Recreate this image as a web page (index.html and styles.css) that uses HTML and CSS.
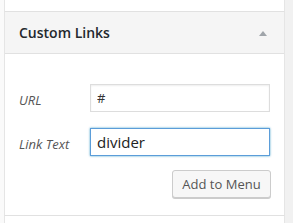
FILE: index.html
```html
<!DOCTYPE html>
<html lang="en">
<head>
  <meta charset="UTF-8">
  <title>Custom Links</title>
  <link rel="stylesheet" href="styles.css">
</head>
<body>
  <div class="menu-column">
    <div class="section section-prev"></div>
    <div class="section">
      <div class="section-title">
        <h3>Custom Links</h3>
        <span class="toggle-arrow"></span>
      </div>
      <div class="section-body">
        <div class="field-row">
          <label class="field-label" for="custom-url">URL</label>
          <input type="text" id="custom-url" class="field-input" value="#">
        </div>
        <div class="field-row">
          <label class="field-label" for="custom-text">Link Text</label>
          <input type="text" id="custom-text" class="field-input focused" value="divider">
        </div>
        <div class="actions">
          <button class="btn">Add to Menu</button>
        </div>
      </div>
    </div>
    <div class="section section-next"></div>
  </div>
</body>
</html>
```

FILE: styles.css
```css
* {
  margin: 0;
  padding: 0;
  box-sizing: border-box;
}

html, body {
  height: 100%;
  overflow: hidden;
}

body {
  font-family: "Open Sans", sans-serif;
  background-color: #f1f1f1;
  color: #444;
}

.menu-column {
  width: 285px;
  padding-left: 4px;
  background-color: #fafafa;
}

.section {
  background-color: #fff;
  border-left: 1px solid #e5e5e5;
  border-right: 1px solid #e5e5e5;
  border-bottom: 1px solid #e1e1e1;
}

.section-prev {
  height: 12px;
}

.section-next {
  height: 7px;
  border-bottom: none;
}

.section-title {
  height: 42px;
  background-color: #f5f5f5;
  border-bottom: 1px solid #e1e1e1;
  padding: 0 14px;
  display: flex;
  align-items: center;
  justify-content: space-between;
}

.section-title h3 {
  font-size: 14px;
  font-weight: 600;
  color: #23282d;
  line-height: 20px;
  padding-top: 1px;
}

.toggle-arrow {
  width: 0;
  height: 0;
  border-left: 4px solid transparent;
  border-right: 4px solid transparent;
  border-bottom: 5px solid #a0a5aa;
  margin-right: 3px;
  margin-top: 2px;
}

.section-body {
  padding: 30px 13px 17px 14px;
}

.field-row {
  display: flex;
  align-items: center;
  margin-bottom: 16px;
}

.field-label {
  width: 71px;
  font-size: 13px;
  font-style: italic;
  color: #555;
  padding-top: 3px;
}

.field-input {
  width: 180px;
  height: 28px;
  border: 1px solid #ddd;
  box-shadow: inset 0 1px 2px rgba(0, 0, 0, 0.07);
  padding: 0 6px;
  font-family: "Open Sans", sans-serif;
  font-size: 13px;
  color: #333;
  outline: none;
}

.field-input.focused {
  border-color: #5b9dd9;
  box-shadow: 0 0 2px rgba(30, 140, 190, 0.8);
  font-size: 15px;
  color: #222;
}

.actions {
  display: flex;
  justify-content: flex-end;
  margin-top: -2px;
}

.btn {
  width: 99px;
  height: 28px;
  border: 1px solid #ccc;
  border-radius: 3px;
  background-color: #f7f7f7;
  box-shadow: 0 1px 0 #ccc;
  font-family: "Open Sans", sans-serif;
  font-size: 13px;
  color: #555;
  cursor: pointer;
}
```
